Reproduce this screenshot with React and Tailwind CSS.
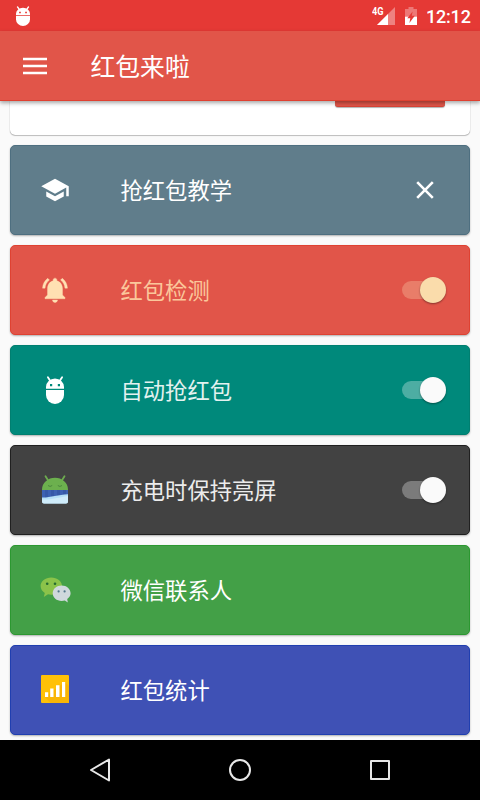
import { useState } from 'react'

function RobotIcon({ className }) {
  return (
    <svg viewBox="0 0 18 28" preserveAspectRatio="none" className={className}>
      <path d="M1.9 1.3 4.2 4.8M16.1 1.3 13.8 4.8" stroke="currentColor" strokeWidth="1.8" strokeLinecap="round" />
      <path
        fill="currentColor"
        fillRule="evenodd"
        d="M0 12.8V11a9 8.6 0 0 1 18 0v1.800zM4 8v2.200H6.200V8zM11.800 8v2.200H14V8z"
      />
      <path fill="currentColor" d="M0 14h18v5a9 9 0 0 1-18 0z" />
    </svg>
  )
}

function SchoolIcon() {
  return (
    <svg viewBox="0 0 24 24" fill="currentColor" className="w-[30px] h-[30px]">
      <path d="M5 13.18v4L12 21l7-3.82v-4L12 17l-7-3.82zM12 3 1 9l11 6 9-4.91V17h2V9L12 3z" />
    </svg>
  )
}

function BellIcon() {
  return (
    <svg viewBox="0 0 24 24" fill="currentColor" className="w-[30px] h-[30px]">
      <path stroke="currentColor" strokeWidth="0.3" d="M7.58 4.08 6.15 2.65C3.75 4.48 2.17 7.3 2.03 10.5h2c.15-2.65 1.51-4.97 3.55-6.42zm12.39 6.42h2c-.15-3.2-1.73-6.02-4.12-7.85l-1.42 1.43c2.02 1.45 3.39 3.77 3.54 6.42zM18 11c0-3.07-1.64-5.64-4.5-6.32V4c0-.83-.67-1.5-1.5-1.5s-1.5.67-1.5 1.5v.68C7.63 5.36 6 7.92 6 11v5l-2 2v1h16v-1l-2-2v-5zm-6 11c.14 0 .27-.01.4-.04.65-.14 1.18-.58 1.44-1.18.1-.24.15-.5.15-.78h-4c.01 1.1.9 2 2.01 2z" />
    </svg>
  )
}

function SleepIcon() {
  return (
    <svg viewBox="0 0 30 30" className="w-[30px] h-[30px]">
      <path d="M5.500 1.300 8 5.200M24.500 1.300 22 5.200" stroke="#6dab4f" strokeWidth="1.800" strokeLinecap="round" />
      <path d="M2 16v-1.500a13 11.700 0 0 1 26 0V16z" fill="#6cb04e" />
      <path d="M8 10.500q2.100 1.900 4.200 0M17.800 10.500q2.100 1.900 4.200 0" stroke="#47823b" strokeWidth="0.900" fill="none" />
      <path d="M2 15h26v10H2z" fill="#3d62b3" />
      <path d="M5 15h3v9H5zM11 15h3v8h-3zM17 15h3v7h-3zM23 15h3v6h-3z" fill="#3659a8" />
      <path d="M2 22.500c8 .3 16-2.900 26-3.300V26.500q0 2-2 2H4q-2 0-2-2z" fill="#b5e0f7" />
      <path d="M2 24.500c9 .4 16-2.100 26-3.600V26.500q0 2-2 2H4q-2 0-2-2z" fill="#cfecfa" />
    </svg>
  )
}

function WechatIcon() {
  return (
    <svg viewBox="0 0 32 30" className="w-[32px] h-[30px] -ml-px">
      <path d="M12.200 2.400C6.300 2.400 1.600 6.200 1.600 11c0 2.900 1.600 5.300 4.200 7l-1 4 4.200-2.700c1 .3 2.100.4 3.200.4 6 0 10.800-3.900 10.800-8.700s-4.800-8.600-10.800-8.600z" fill="#8bc34a" />
      <circle cx="8.200" cy="8.800" r="1.300" fill="#246b31" />
      <circle cx="16" cy="8.800" r="1.300" fill="#246b31" />
      <path d="M22.700 10.600c-5 0-9 3.400-9 7.700s3.900 7.700 9 7.700c1.100 0 2.100-.2 3.100-.5l3 2-.6-3.600c2.100-1.300 3.400-3.300 3.400-5.600 0-4.200-4-7.700-8.900-7.700z" fill="#cfd8dc" />
      <circle cx="19.600" cy="16.400" r="1.100" fill="#51768b" />
      <circle cx="25.600" cy="16.400" r="1.100" fill="#51768b" />
    </svg>
  )
}

function ChartIcon() {
  return (
    <svg viewBox="0 0 28 28" className="w-[28px] h-[28px] -mt-[2px]">
      <rect width="28" height="28" rx="1" fill="#ffc107" />
      <path d="M4 22 24 7l4 4v17H9.500z" fill="#f9b506" />
      <path d="M4 17.200h3.200V22H4zM9.200 13.500h3.300V22H9.200zM15 10.200h3.500V22H15zM21 7h3.200v15H21z" fill="#fff" />
    </svg>
  )
}

function Switch({ on, onClick, thumb, track }) {
  return (
    <button onClick={onClick} className={`relative w-11 h-[18px] rounded-full ${track}`}>
      <span
        className={`absolute -top-1 w-[26px] h-[26px] rounded-full shadow-[0_1px_2px_rgba(0,0,0,0.4)] ${thumb} ${on ? 'right-0' : 'left-0'}`}
      />
    </button>
  )
}

const cards = [
  { id: 'teach', label: '抢红包教学', icon: <SchoolIcon />, card: 'bg-[#607d8b] border-[#4e6f80] text-white', close: true },
  { id: 'detect', label: '红包检测', icon: <BellIcon />, card: 'bg-[#e15549] border-[#df4232] text-[#ffe0b2]', text: 'text-[#fbc79b]', track: 'bg-[#e97d69]', thumb: 'bg-[#fadcab]' },
  { id: 'auto', label: '自动抢红包', icon: <RobotIcon className="w-[18px] h-[28px]" />, card: 'bg-[#00897b] border-[#007f70] text-white', text: 'text-[#e3f2f0]', track: 'bg-[#4dada3]', thumb: 'bg-[#fafafa]' },
  { id: 'awake', label: '充电时保持亮屏', icon: <SleepIcon />, card: 'bg-[#424242] border-[#202020] text-white', text: 'text-[#ececec]', track: 'bg-[#7b7b7b]', thumb: 'bg-[#fafafa]' },
  { id: 'contacts', label: '微信联系人', icon: <WechatIcon />, card: 'bg-[#43a047] border-[#2c9831] text-white' },
  { id: 'stats', label: '红包统计', icon: <ChartIcon />, card: 'bg-[#3f51b5] border-[#203fb0] text-white' },
]

function StatusBar() {
  return (
    <div className="h-[31px] shrink-0 bg-[#e53935] text-white flex items-center pl-4 pr-[10px]">
      <RobotIcon className="w-[14px] h-5 mt-px" />
      <div className="ml-auto flex items-center">
        <svg viewBox="0 0 24 20" className="w-6 h-5">
          <path d="M23 1v18H5z" fill="#fff" fillOpacity="0.32" />
          <path d="M23 1v18h-7V8z" fill="#fff" fillOpacity="0.08" />
          <path d="M16 8v11H5z" fill="#fff" />
          <text x="0" y="9.300" fill="#fff" fontFamily="Roboto" fontWeight="700" fontSize="10.500" textLength="11.500" lengthAdjust="spacingAndGlyphs">4G</text>
        </svg>
        <svg viewBox="0 0 12 18" className="w-3 h-[18px] ml-[9px]">
          <path d="M3.500 0h5v2H12v8H0V2h3.500z" fill="#fff" fillOpacity="0.32" />
          <path d="M0 9.700h12V18H0z" fill="#fff" />
          <path d="M7.600 4.500 2.300 11.300h3l-.9 4.600 5.400-7.100h-3z" fill="#e53935" />
        </svg>
        <span className="ml-[9px] w-[44px] font-[Roboto] font-medium text-[18px] leading-none tracking-[-0.2px] whitespace-nowrap translate-y-px">12:12</span>
      </div>
    </div>
  )
}

function App() {
  const [switches, setSwitches] = useState({ detect: true, auto: true, awake: true })

  const toggle = (id) => setSwitches({ ...switches, [id]: !switches[id] })

  return (
    <div className="w-[480px] h-[800px] overflow-hidden bg-[#fafafa] flex flex-col font-['Noto_Sans_CJK_SC',sans-serif]">
      <StatusBar />

      <header className="relative z-10 h-[70px] shrink-0 bg-[#e15549] border-b border-[#df4030] shadow-[0_2px_4px_rgba(0,0,0,0.35)] text-white flex items-center pl-[23px]">
        <button>
          <svg viewBox="0 0 24 18" className="w-6 h-[18px]">
            <path d="M0 2h24M0 9h24M0 16h24" stroke="currentColor" strokeWidth="2.400" />
          </svg>
        </button>
        <h1 className="ml-[43.5px] text-[24.8px] leading-none">红包来啦</h1>
      </header>

      <main className="flex-1 min-h-0 overflow-hidden px-[10px] flex flex-col gap-[10px]">
        {/* bottom of the card scrolled under the toolbar */}
        <div className="h-[34px] shrink-0 bg-white rounded-b-[5px] shadow-[0_1px_1px_rgba(0,0,0,0.22),0_0_1px_rgba(0,0,0,0.4)] flex justify-end pr-[25px]">
          <div className="w-[110px] h-[6px] rounded-b-[3px] bg-[#e15549] border-b border-[#d84436] shadow-[0_1px_1px_rgba(0,0,0,0.3)]" />
        </div>

        {cards.map((c) => (
          <div
            key={c.id}
            className={`h-[90px] shrink-0 rounded-[5px] border shadow-[0_1px_2px_rgba(0,0,0,0.3)] flex items-center pr-[23px] ${c.card}`}
          >
            <div className="w-[88px] flex justify-center">{c.icon}</div>
            <span className={`ml-[21.5px] pb-[2px] flex-1 text-[22.3px] leading-none ${c.text || ''}`}>{c.label}</span>
            {c.close && (
              <button className="mr-3">
                <svg viewBox="0 0 18 18" className="w-[18px] h-[18px]">
                  <path d="m1.200 1.200 15.600 15.600m0-15.600-15.600 15.600" stroke="#fff" strokeWidth="2.600" />
                </svg>
              </button>
            )}
            {c.track && <Switch on={switches[c.id]} onClick={() => toggle(c.id)} thumb={c.thumb} track={c.track} />}
          </div>
        ))}
      </main>

      <nav className="h-[60px] shrink-0 bg-black flex items-center justify-center gap-[110px]">
        <svg viewBox="0 0 30 30" className="w-[30px] h-[30px]">
          <path d="M24 4.500v21L6 15z" fill="none" stroke="#e8e8e8" strokeWidth="2" strokeLinejoin="round" />
        </svg>
        <svg viewBox="0 0 30 30" className="w-[30px] h-[30px]">
          <circle cx="15" cy="15" r="10" fill="none" stroke="#e8e8e8" strokeWidth="2" />
        </svg>
        <svg viewBox="0 0 30 30" className="w-[30px] h-[30px]">
          <rect x="6" y="6" width="18" height="18" fill="none" stroke="#e8e8e8" strokeWidth="2" strokeLinejoin="round" />
        </svg>
      </nav>
    </div>
  )
}

export default App
